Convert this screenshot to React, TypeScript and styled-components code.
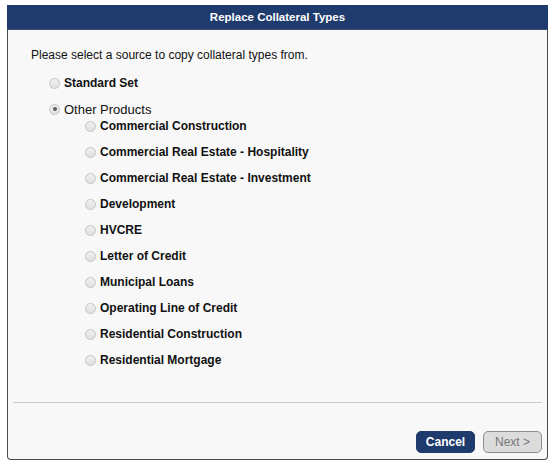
import * as React from 'react'
import styled, { createGlobalStyle } from 'styled-components'

const colors = {
  navy: '#1f3b6d',
  border: '#4a4a4a',
  panel: '#f8f8f8',
  rule: '#cccccc',
  text: '#111111',
  muted: '#777777',
}

const GlobalStyle = createGlobalStyle`
  html, body {
    margin: 0;
    padding: 0;
    background: #ffffff;
    font-family: "Liberation Sans", Arial, sans-serif;
  }
`

const Page = styled.div`
  padding: 5px 0 0 7px;
`

const Dialog = styled.div`
  display: flex;
  flex-direction: column;
  width: 541px;
  height: 455px;
  box-sizing: border-box;
  border: 1px solid ${colors.border};
  border-top: none;
  border-radius: 0 0 4px 4px;
  background: ${colors.panel};
`

const Header = styled.div`
  height: 24px;
  margin: 0 -1px;
  background: ${colors.navy};
  border-bottom: 1px solid #3d4f6e;
  color: #fff;
  font-size: 11.5px;
  font-weight: bold;
  display: flex;
  align-items: center;
  justify-content: center;
`

const Body = styled.div`
  flex: 1;
  padding: 18px 0 0 23px;
`

const Prompt = styled.p`
  margin: 0 0 13px;
  font-size: 12px;
  line-height: 14px;
  color: ${colors.text};
`

const OptionList = styled.div<{ $nested?: boolean }>`
  display: flex;
  flex-direction: column;
  gap: 10px;
  padding-left: ${p => (p.$nested ? '36px' : '18px')};
  margin-top: ${p => (p.$nested ? '1px' : '0')};
`

const Option = styled.label<{ $bold?: boolean }>`
  display: flex;
  align-items: center;
  gap: 4px;
  height: 16px;
  font-size: ${p => (p.$bold ? '12px' : '13px')};
  font-weight: ${p => (p.$bold ? 'bold' : 'normal')};
  color: ${colors.text};
`

const Radio = styled.span<{ $checked?: boolean }>`
  position: relative;
  width: 11px;
  height: 11px;
  box-sizing: border-box;
  border-radius: 50%;
  border: 1px solid #c4c4c4;
  background: linear-gradient(#f0f0f0, #e0e0e0);
  flex-shrink: 0;

  &::after {
    content: '';
    display: ${p => (p.$checked ? 'block' : 'none')};
    position: absolute;
    left: 2.5px;
    top: 2.5px;
    width: 4px;
    height: 4px;
    border-radius: 50%;
    background: #5e5e5e;
  }
`

const Footer = styled.div`
  margin: 0 5px;
  height: 57px;
  border-top: 1px solid ${colors.rule};
  display: flex;
  justify-content: flex-end;
  align-items: flex-start;
  gap: 8px;
  padding-top: 28px;
  box-sizing: border-box;
`

const Button = styled.button<{ $primary?: boolean }>`
  width: 59px;
  height: 22px;
  padding: 0;
  border-radius: 5px;
  font-family: "Liberation Sans", Arial, sans-serif;
  font-size: 12px;
  font-weight: ${p => (p.$primary ? 'bold' : 'normal')};
  color: ${p => (p.$primary ? '#ffffff' : colors.muted)};
  background: ${p => (p.$primary ? colors.navy : '#dcdcdc')};
  border: 1px solid ${p => (p.$primary ? colors.navy : '#8e8e8e')};
`

const products = [
  'Commercial Construction',
  'Commercial Real Estate - Hospitality',
  'Commercial Real Estate - Investment',
  'Development',
  'HVCRE',
  'Letter of Credit',
  'Municipal Loans',
  'Operating Line of Credit',
  'Residential Construction',
  'Residential Mortgage',
]

const App: React.FC = () => (
  <Page>
    <GlobalStyle />
    <Dialog>
      <Header>Replace Collateral Types</Header>
      <Body>
        <Prompt>Please select a source to copy collateral types from.</Prompt>
        <OptionList>
          <Option $bold>
            <Radio />
            Standard Set
          </Option>
          <div>
            <Option>
              <Radio $checked />
              Other Products
            </Option>
            <OptionList $nested>
              {products.map(name => (
                <Option $bold key={name}>
                  <Radio />
                  {name}
                </Option>
              ))}
            </OptionList>
          </div>
        </OptionList>
      </Body>
      <Footer>
        <Button $primary>Cancel</Button>
        <Button disabled>Next &gt;</Button>
      </Footer>
    </Dialog>
  </Page>
)

export default App
